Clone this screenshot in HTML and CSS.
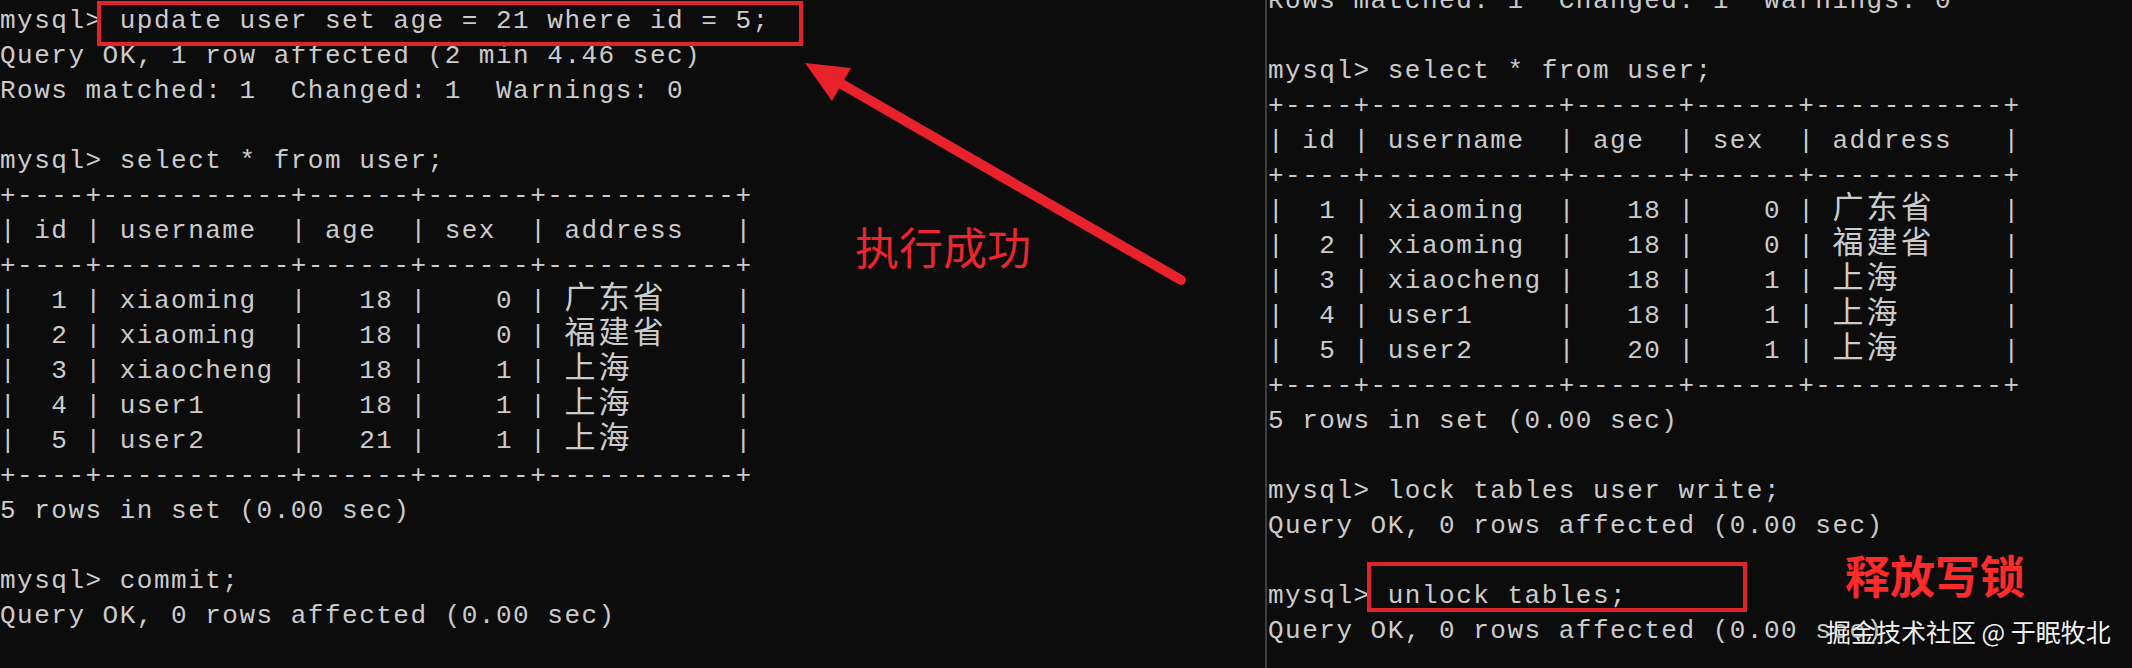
FILE: index.html
```html
<!DOCTYPE html>
<html lang="zh-CN">
<head>
<meta charset="utf-8">
<title>mysql lock tables</title>
<link rel="stylesheet" href="styles.css">
</head>
<body>
<div class="screen">
  <section class="pane pane-left">
<pre class="term term-left">mysql&gt; update user set age = 21 where id = 5;
Query OK, 1 row affected (2 min 4.46 sec)
Rows matched: 1  Changed: 1  Warnings: 0

mysql&gt; select * from user;
+----+-----------+------+------+-----------+
| id | username  | age  | sex  | address   |
+----+-----------+------+------+-----------+
|  1 | xiaoming  |   18 |    0 | <span class="cjk">广东省</span>    |
|  2 | xiaoming  |   18 |    0 | <span class="cjk">福建省</span>    |
|  3 | xiaocheng |   18 |    1 | <span class="cjk">上海</span>      |
|  4 | user1     |   18 |    1 | <span class="cjk">上海</span>      |
|  5 | user2     |   21 |    1 | <span class="cjk">上海</span>      |
+----+-----------+------+------+-----------+
5 rows in set (0.00 sec)

mysql&gt; commit;
Query OK, 0 rows affected (0.00 sec)</pre>
  </section>
  <section class="pane pane-right">
<pre class="term term-right">Rows matched: 1  Changed: 1  Warnings: 0

mysql&gt; select * from user;
+----+-----------+------+------+-----------+
| id | username  | age  | sex  | address   |
+----+-----------+------+------+-----------+
|  1 | xiaoming  |   18 |    0 | <span class="cjk">广东省</span>    |
|  2 | xiaoming  |   18 |    0 | <span class="cjk">福建省</span>    |
|  3 | xiaocheng |   18 |    1 | <span class="cjk">上海</span>      |
|  4 | user1     |   18 |    1 | <span class="cjk">上海</span>      |
|  5 | user2     |   20 |    1 | <span class="cjk">上海</span>      |
+----+-----------+------+------+-----------+
5 rows in set (0.00 sec)

mysql&gt; lock tables user write;
Query OK, 0 rows affected (0.00 sec)

mysql&gt; unlock tables;
Query OK, 0 rows affected (0.00 sec)</pre>
  </section>

  <div class="mark mark-update"></div>
  <div class="mark mark-unlock"></div>

  <svg class="arrow" width="1265" height="668" viewBox="0 0 1265 668" aria-hidden="true">
    <line x1="826" y1="75" x2="1181" y2="280" stroke="#e8222b" stroke-width="10" stroke-linecap="round"/>
    <polygon points="805,63 851,68 832,101" fill="#e8222b"/>
  </svg>

  <div class="note note-success">执行成功</div>
  <div class="note note-unlock">释放写锁</div>
  <div class="watermark">掘金技术社区 @ 于眠牧北</div>
</div>
</body>
</html>
```

FILE: styles.css
```css
html, body {
  margin: 0;
  padding: 0;
  background: #0c0c0c;
}

body {
  width: 2132px;
  height: 668px;
  overflow: hidden;
}

.screen {
  position: relative;
  display: flex;
  width: 2132px;
  height: 668px;
  overflow: hidden;
  background: #0c0c0c;
}

.pane {
  overflow: hidden;
}

.pane-left {
  width: 1265px;
  flex: none;
}

.pane-right {
  flex: 1;
  border-left: 2px solid #3e3e3e;
  padding-left: 1px;
}

.term {
  margin: 0;
  font-family: "Liberation Mono", monospace;
  font-size: 26px;
  letter-spacing: 1.5px;
  line-height: 35px;
  color: #cbcbcb;
  white-space: pre;
}

.term-left {
  padding-top: 3.5px;
}

.term-right {
  margin-top: -16.5px;
}

.cjk {
  font-family: "Noto Sans CJK SC", sans-serif;
  font-size: 31px;
  letter-spacing: 3.2px;
  line-height: 0;
}

.mark {
  position: absolute;
  box-sizing: border-box;
  border: 4px solid #e1242c;
}

.mark-update {
  left: 97px;
  top: 1px;
  width: 706px;
  height: 45px;
}

.mark-unlock {
  left: 1367px;
  top: 562px;
  width: 380px;
  height: 50px;
}

.arrow {
  position: absolute;
  left: 0;
  top: 0;
}

.note {
  position: absolute;
  font-family: "Noto Sans CJK SC", sans-serif;
  line-height: 1;
  white-space: nowrap;
}

.note-success {
  left: 855px;
  top: 224px;
  font-size: 44px;
  color: #ea262e;
}

.note-unlock {
  left: 1845px;
  top: 552px;
  font-size: 45px;
  font-weight: 700;
  color: #ff2a2a;
}

.watermark {
  position: absolute;
  left: 1826px;
  top: 619px;
  font-family: "Noto Sans CJK SC", sans-serif;
  font-size: 25px;
  line-height: 1;
  color: #f2f2f2;
  white-space: nowrap;
  text-shadow: 0 0 2px rgba(0, 0, 0, 0.6);
}
```
